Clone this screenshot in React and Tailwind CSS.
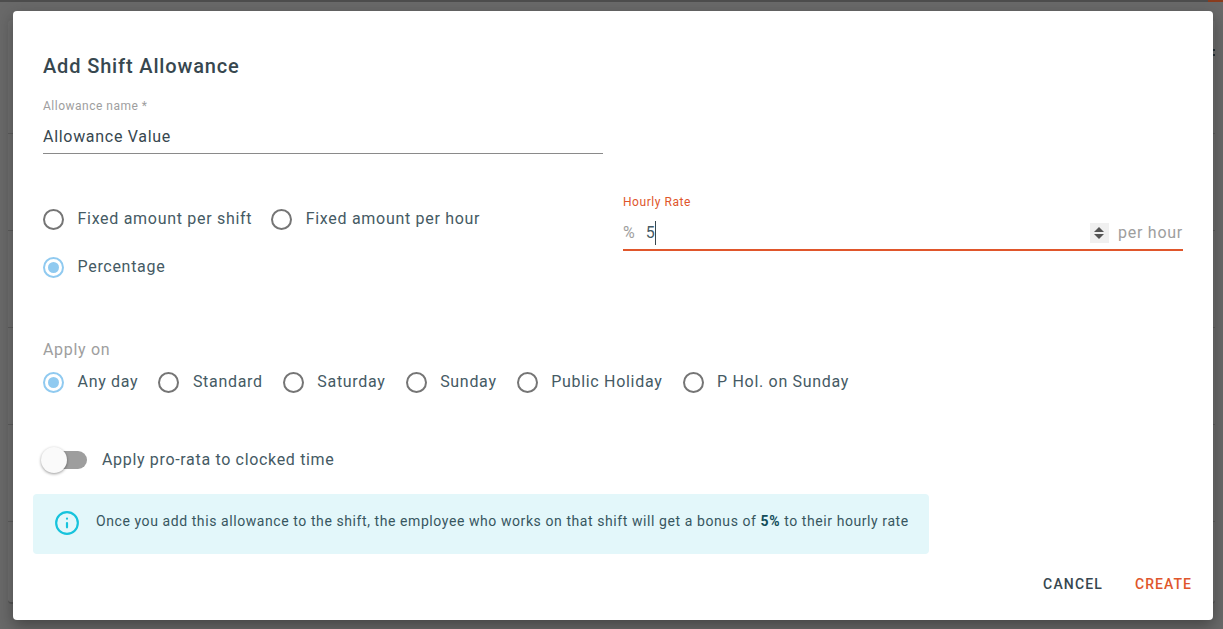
import { Info } from "lucide-react";

function Radio({ label, checked = false }) {
  return (
    <label className="flex items-center gap-[13.5px]">
      <span
        className={`flex h-[21px] w-[21px] shrink-0 items-center justify-center rounded-full border-2 ${
          checked ? "border-[#90caf0]" : "border-[#757575]"
        }`}
      >
        {checked ? <span className="h-[11px] w-[11px] rounded-full bg-[#90caf0]" /> : null}
      </span>
      <span className="whitespace-nowrap text-base leading-[24px] tracking-[0.7px] text-[#455a64]">{label}</span>
    </label>
  );
}

const DAYS = [
  { label: "Any day", checked: true },
  { label: "Standard" },
  { label: "Saturday" },
  { label: "Sunday" },
  { label: "Public Holiday" },
  { label: "P Hol. on Sunday" },
];

const BACK_ROWS = [0, 1, 2, 3, 4];

export default function App() {
  return (
    <div
      className="relative h-[629px] w-[1223px] overflow-hidden bg-[#696969]"
      style={{ fontFamily: "Roboto, sans-serif" }}
    >
      {/* page behind the dialog */}
      <div className="flex h-[2px] justify-end bg-[#4d4d4d]">
        <div className="h-[2px] w-[15px] bg-[#8a3c1e]" />
      </div>
      <div className="mx-[8px] mt-[18px] h-[584px] rounded-[4px] border-b-2 border-[#555555] bg-[#707070]">
        <div className="flex justify-end pt-[29px]">
          <div className="flex flex-col items-end gap-[3px]">
            <span className="h-[2px] w-[7px] bg-[#263238]" />
            <span className="h-[2px] w-[4px] bg-[#263238]" />
          </div>
        </div>
        <div>
          {BACK_ROWS.map((row) => (
            <div key={row} className="mt-[69px] h-[28px] border-b border-[#5e5e5e] first:mt-[50px]" />
          ))}
        </div>
      </div>

      <div className="absolute left-[13px] top-[11px] flex h-[609px] w-[1200px] flex-col rounded-[4px] bg-white px-[30px] shadow-[0_6px_16px_rgba(0,0,0,0.35)]">
        <h2 className="mt-[43px] text-[20px] font-medium leading-[24px] tracking-[0.85px] text-[#37474f]">Add Shift Allowance</h2>

        <div className="mt-[21px] w-[560px] border-b border-[#8a8a8a] pb-[4px]">
          <div className="text-xs leading-[14px] tracking-[0.5px] text-[#9e9e9e]">Allowance name *</div>
          <div className="mt-[12px] text-base leading-[24px] tracking-[0.7px] text-[#37474f]">Allowance Value</div>
        </div>

        <div className="mt-[41px] flex gap-[20px]">
          <div className="w-[560px] pt-[12px]">
            <div className="flex gap-[19px]">
              <Radio label="Fixed amount per shift" />
              <Radio label="Fixed amount per hour" />
            </div>
            <div className="mt-[24px]">
              <Radio label="Percentage" checked />
            </div>
          </div>
          <div className="flex-1">
            <div className="text-xs leading-[14px] tracking-[0.55px] text-[#e0562b]">Hourly Rate</div>
            <div className="mt-[10px] flex h-[32px] items-center border-b-2 border-[#e0562b] pb-[2px]">
              <span className="text-base leading-[24px] text-[#9e9e9e]">%</span>
              <span className="ml-[11px] border-r border-[#37474f] text-base leading-[24px] text-[#455a64]">5</span>
              <span className="ml-auto flex h-[20px] w-[19px] flex-col items-center justify-center gap-[2px] bg-[#f0f0f0]">
                <span className="h-0 w-0 border-x-[5px] border-b-[5px] border-x-transparent border-b-[#555555]" />
                <span className="h-0 w-0 border-x-[5px] border-t-[5px] border-x-transparent border-t-[#555555]" />
              </span>
              <span className="ml-[9px] text-base leading-[24px] tracking-[0.75px] text-[#9e9e9e]">per hour</span>
            </div>
          </div>
        </div>

        <div className="mt-[59px] text-base leading-[24px] tracking-[0.68px] text-[#9e9e9e]">Apply on</div>
        <div className="mt-[8px] flex gap-[20px]">
          {DAYS.map((day) => (
            <Radio key={day.label} label={day.label} checked={day.checked} />
          ))}
        </div>

        <div className="mt-[54px] flex items-center">
          <span className="relative ml-[4px] h-[18px] w-[40px] rounded-full bg-[#9e9e9e]">
            <span className="absolute -left-[6px] -top-[4px] h-[26px] w-[26px] rounded-full bg-[#fafafa] shadow-[0_1px_3px_rgba(0,0,0,0.4)]" />
          </span>
          <span className="ml-[15px] text-base leading-[24px] tracking-[0.67px] text-[#455a64]">Apply pro-rata to clocked time</span>
        </div>

        <div className="-ml-[10px] mt-[22px] flex h-[60px] w-[896px] items-start rounded-[4px] bg-[#e3f7fa] pl-[21px] pt-[17px]">
          <Info size={26} strokeWidth={2} className="mt-[-1px] shrink-0 text-[#16c3dc]" />
          <p className="ml-[16px] whitespace-nowrap text-sm leading-[20px] tracking-[0.58px] text-[#37565f]">
            Once you add this allowance to the shift, the employee who works on that shift will get a bonus of{" "}
            <b className="font-bold text-[#134e5a]">5%</b> to their hourly rate
          </p>
        </div>

        <div className="-mr-[9px] mt-[18px] flex justify-end gap-[32px]">
          <button type="button" className="text-sm font-medium leading-[24px] tracking-[1.15px] text-[#37474f]">CANCEL</button>
          <button type="button" className="text-sm font-medium leading-[24px] tracking-[1.05px] text-[#e0562b]">CREATE</button>
        </div>
      </div>
    </div>
  );
}
